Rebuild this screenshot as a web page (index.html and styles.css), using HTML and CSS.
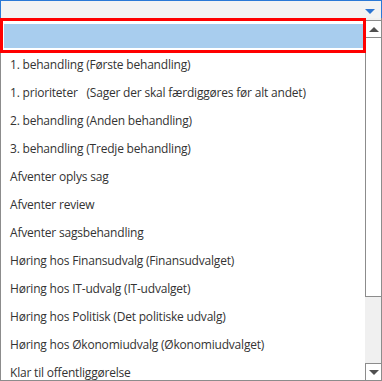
FILE: index.html
```html
<!DOCTYPE html>
<html lang="da">
<head>
  <meta charset="UTF-8" />
  <title>Status</title>
  <link rel="stylesheet" href="styles.css">
</head>
<body>
  <div id="picker">
    <div class="combo">
      <span class="combo-arrow"></span>
    </div>
    <div class="dropdown">
      <ul class="options">
        <li class="option selected"><span class="hl"></span></li>
        <li class="option">1. behandling (Første behandling)</li>
        <li class="option">1. prioriteter   (Sager der skal færdiggøres før alt andet)</li>
        <li class="option">2. behandling (Anden behandling)</li>
        <li class="option">3. behandling (Tredje behandling)</li>
        <li class="option">Afventer oplys sag</li>
        <li class="option">Afventer review</li>
        <li class="option">Afventer sagsbehandling</li>
        <li class="option">Høring hos Finansudvalg (Finansudvalget)</li>
        <li class="option">Høring hos IT-udvalg (IT-udvalget)</li>
        <li class="option">Høring hos Politisk (Det politiske udvalg)</li>
        <li class="option">Høring hos Økonomiudvalg (Økonomiudvalget)</li>
        <li class="option">Klar til offentliggørelse</li>
      </ul>
      <div class="scrollbar">
        <div class="sb-btn up"><span class="tri-up"></span></div>
        <div class="sb-thumb"></div>
        <div class="sb-track"></div>
        <div class="sb-btn down"><span class="tri-down"></span></div>
      </div>
    </div>
    <div class="marker"></div>
  </div>
</body>
</html>
```

FILE: styles.css
```css
body {
  margin: 0;
  padding: 0;
  background-color: #fff;
  font-family: "Open Sans", "Noto Sans", sans-serif;
  overflow: hidden;
}

#picker {
  width: 382px;
  height: 381px;
  position: relative;
  display: flex;
  flex-direction: column;
}

.combo {
  height: 17px;
  border: 1px solid #2b79d6;
  border-bottom: none;
  background-color: #f3f3f3;
  display: flex;
  justify-content: flex-end;
  align-items: center;
  padding-right: 6px;
}

.combo-arrow {
  width: 0;
  height: 0;
  border-left: 5px solid transparent;
  border-right: 5px solid transparent;
  border-top: 5px solid #2b74d2;
  margin-top: 4px;
}

.dropdown {
  flex: 1;
  display: flex;
  border: 1px solid #8c8c8c;
  border-top: none;
  overflow: hidden;
  min-height: 0;
}

.options {
  flex: 1;
  list-style: none;
  margin: 0;
  padding: 4px 0 0 0;
  overflow: hidden;
}

.option {
  height: 27px;
  line-height: 27px;
  padding: 1px 0 0 9px;
  font-size: 12px;
  letter-spacing: -0.2px;
  color: #333;
  white-space: pre;
}

.selected {
  padding: 2px 0 2px 3px;
  height: 24px;
}

.hl {
  display: block;
  height: 24px;
  background-color: #a8cdee;
}

.scrollbar {
  width: 16px;
  display: flex;
  flex-direction: column;
  padding-top: 2px;
  background-color: #f0f0f0;
}

.sb-btn {
  height: 16px;
  border: 1px solid #8c8c8c;
  border-right: none;
  background-color: #fff;
  display: flex;
  justify-content: center;
  align-items: center;
}

.sb-btn.down {
  border-bottom: none;
}

.tri-up {
  border-left: 5px solid transparent;
  border-right: 5px solid transparent;
  border-bottom: 5px solid #505050;
}

.tri-down {
  border-left: 5px solid transparent;
  border-right: 5px solid transparent;
  border-top: 5px solid #505050;
}

.sb-thumb {
  height: 258px;
  border: 1px solid #8c8c8c;
  border-top: none;
  border-right: none;
  background-color: #fff;
}

.sb-track {
  flex: 1;
}

.marker {
  position: absolute;
  left: 0;
  top: 18px;
  width: 360px;
  height: 29px;
  border: 3px solid #ff0000;
}
```
